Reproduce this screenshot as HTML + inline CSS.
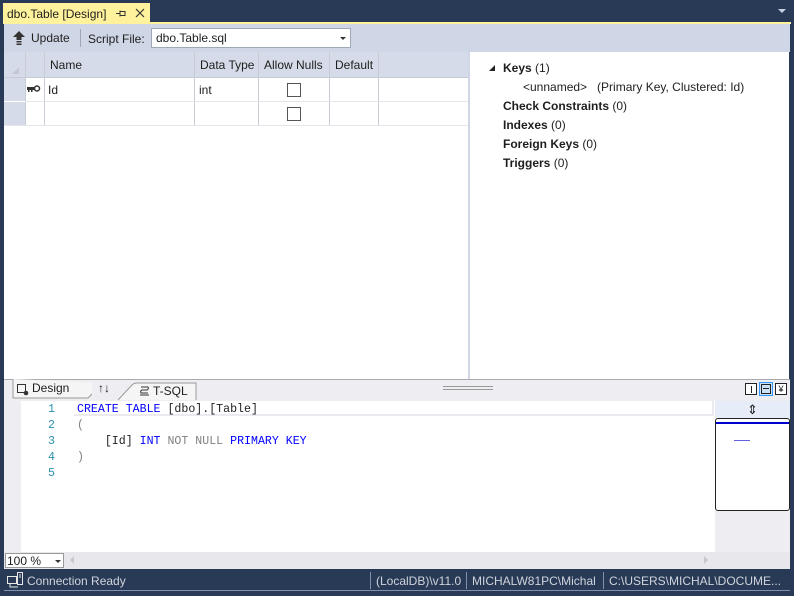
<!DOCTYPE html>
<html><head><meta charset="utf-8"><style>
*{margin:0;padding:0;box-sizing:border-box}
body{width:794px;height:596px;background:#293a56;font-family:"Liberation Sans",sans-serif;font-size:12px;color:#1e1e1e;position:relative;overflow:hidden}
.abs{position:absolute}
.mono{font-family:"Liberation Mono",monospace;font-size:11.6px}
</style></head><body>
<!-- tab -->
<div class="abs" style="left:3px;top:3px;width:147px;height:20px;background:#fff29d"></div>
<div class="abs" style="left:7px;top:7px;font-size:12px">dbo.Table [Design]</div>
<svg class="abs" style="left:115px;top:9px" width="12" height="9"><path d="M1 4.5 H5 M5 1.5 V7.5 M5 2.5 H10 V6.5 H5" fill="none" stroke="#333"/></svg>
<svg class="abs" style="left:135px;top:8px" width="10" height="10"><path d="M1 1 L9 9 M9 1 L1 9" stroke="#333" stroke-width="1.2"/></svg>
<div class="abs" style="left:778px;top:9px;width:0;height:0;border-left:4px solid transparent;border-right:4px solid transparent;border-top:4px solid #c8d0e0"></div>
<div class="abs" style="left:3px;top:22px;width:788px;height:2px;background:#fff29d"></div>
<!-- toolbar -->
<div class="abs" style="left:4px;top:24px;width:786px;height:28px;background:#cfd6e5"></div>
<svg class="abs" style="left:12px;top:30px" width="14" height="16"><path d="M7 1 L13 7 H9.5 V10 H4.5 V7 H1 Z" fill="#333"/><rect x="4.5" y="11" width="5" height="1.5" fill="#333"/><rect x="4.5" y="13.5" width="5" height="1.5" fill="#333"/></svg>
<div class="abs" style="left:31px;top:31px">Update</div>
<div class="abs" style="left:80px;top:29px;width:1px;height:18px;background:#a0a8b8"></div>
<div class="abs" style="left:88px;top:32px">Script File:</div>
<div class="abs" style="left:151px;top:28px;width:200px;height:20px;background:#fff;border:1px solid #a0a8b8"></div>
<div class="abs" style="left:156px;top:31px">dbo.Table.sql</div>
<div class="abs" style="left:340px;top:37px;border-left:3px solid transparent;border-right:3px solid transparent;border-top:3px solid #333"></div>
<!-- left grid -->
<div class="abs" style="left:4px;top:52px;width:464px;height:327px;background:#fff"></div>
<div class="abs" style="left:4px;top:52px;width:464px;height:26px;background:#d5dbe8;border-bottom:1px solid #c8ccd4"></div>
<div class="abs" style="left:4px;top:78px;width:21px;height:48px;background:#d5dbe8"></div>
<div class="abs" style="left:4px;top:101px;width:21px;height:1px;background:#fff"></div>
<div class="abs" style="left:12px;top:67px;border-left:7px solid transparent;border-bottom:7px solid #c3c8d2"></div>
<div class="abs" style="left:25px;top:52px;width:1px;height:74px;background:#c8ccd4"></div>
<div class="abs" style="left:44px;top:52px;width:1px;height:74px;background:#c8ccd4"></div>
<div class="abs" style="left:194px;top:52px;width:1px;height:74px;background:#c8ccd4"></div>
<div class="abs" style="left:258px;top:52px;width:1px;height:74px;background:#c8ccd4"></div>
<div class="abs" style="left:329px;top:52px;width:1px;height:74px;background:#c8ccd4"></div>
<div class="abs" style="left:378px;top:52px;width:1px;height:74px;background:#c8ccd4"></div>
<div class="abs" style="left:25px;top:101px;width:443px;height:1px;background:#e4e6ea"></div>
<div class="abs" style="left:4px;top:125px;width:464px;height:1px;background:#e4e6ea"></div>
<div class="abs" style="left:50px;top:58px">Name</div>
<div class="abs" style="left:200px;top:58px">Data Type</div>
<div class="abs" style="left:264px;top:58px">Allow Nulls</div>
<div class="abs" style="left:335px;top:58px">Default</div>
<svg class="abs" style="left:27px;top:85px" width="14" height="8"><rect x="0" y="2" width="8" height="3" fill="#333"/><rect x="1" y="5" width="1.5" height="2" fill="#333"/><rect x="4" y="5" width="1.5" height="2" fill="#333"/><circle cx="10" cy="3.5" r="2.5" fill="none" stroke="#333" stroke-width="1.5"/></svg>
<div class="abs" style="left:48px;top:83px">Id</div>
<div class="abs" style="left:199px;top:83px">int</div>
<div class="abs" style="left:287px;top:83px;width:14px;height:14px;border:1px solid #555;background:#fff"></div>
<div class="abs" style="left:287px;top:107px;width:14px;height:14px;border:1px solid #555;background:#fff"></div>
<!-- divider -->
<div class="abs" style="left:468px;top:52px;width:2px;height:327px;background:#cfd6e5"></div>
<div class="abs" style="left:473px;top:170px;width:1px;height:48px;background:#999"></div>
<div class="abs" style="left:476px;top:170px;width:1px;height:48px;background:#999"></div>
<!-- right panel -->
<div class="abs" style="left:470px;top:52px;width:319px;height:327px;background:#fff"></div>
<div class="abs" style="left:489px;top:65px;border-left:6px solid transparent;border-bottom:6px solid #222"></div>
<div class="abs" style="left:503px;top:61px"><b>Keys</b> (1)</div>
<div class="abs" style="left:523px;top:80px">&lt;unnamed&gt;&nbsp;&nbsp;&nbsp;(Primary Key, Clustered: Id)</div>
<div class="abs" style="left:503px;top:99px"><b>Check Constraints</b> (0)</div>
<div class="abs" style="left:503px;top:118px"><b>Indexes</b> (0)</div>
<div class="abs" style="left:503px;top:137px"><b>Foreign Keys</b> (0)</div>
<div class="abs" style="left:503px;top:156px"><b>Triggers</b> (0)</div>
<!-- bottom tab bar -->
<div class="abs" style="left:4px;top:379px;width:786px;height:22px;background:#eeeef2;border-top:1px solid #aaa"></div>
<svg class="abs" style="left:12px;top:379px" width="80" height="21"><path d="M1 0 V19 H76 L91 4" fill="#f5f5f5" stroke="#999"/></svg>
<svg class="abs" style="left:17px;top:384px" width="12" height="12"><rect x="0.5" y="0.5" width="8" height="8" fill="none" stroke="#333"/><circle cx="9" cy="9" r="2.3" fill="#333"/></svg>
<div class="abs" style="left:32px;top:381px">Design</div>
<div class="abs" style="left:98px;top:381px;font-size:12px;font-weight:bold">↑↓</div>
<svg class="abs" style="left:118px;top:381px" width="80" height="20"><path d="M0 19 L14 4 Q16 2 19 2 H78 V19" fill="#f5f5f5" stroke="#999"/></svg>
<svg class="abs" style="left:139px;top:386px" width="11" height="10"><path d="M2 1 H9 Q10 3 8 4 H3 Q1 5 2 7 H9 M1 9 H10" fill="none" stroke="#333"/></svg>
<div class="abs" style="left:153px;top:384px">T-SQL</div>
<div class="abs" style="left:443px;top:386px;width:50px;height:1px;background:#999"></div>
<div class="abs" style="left:443px;top:389px;width:50px;height:1px;background:#999"></div>
<div class="abs" style="left:745px;top:383px;width:12px;height:12px;border:1px solid #222;background:#fff"><div style="margin:2px 0 0 5px;width:1px;height:7px;background:#222"></div></div>
<div class="abs" style="left:759px;top:382px;width:14px;height:14px;border:1px solid #3399ff;background:#c9e0f7"><div style="margin:1px;width:10px;height:10px;border:1px solid #222"><div style="margin:3px 1px;height:1px;background:#222"></div></div></div>
<div class="abs" style="left:775px;top:383px;width:12px;height:12px;border:1px solid #222;background:#fff;font-size:9px;line-height:10px;text-align:center">¥</div>
<!-- editor -->
<div class="abs" style="left:4px;top:401px;width:711px;height:151px;background:#fff"></div>
<div class="abs" style="left:4px;top:401px;width:17px;height:151px;background:#eeeef2"></div>
<div class="abs" style="left:74px;top:401px;width:640px;height:15px;border:2px solid #eaeaf0;border-top:none;border-left:none"></div>
<div class="abs mono" style="left:48px;top:402px;color:#2b91af;line-height:16px">1<br>2<br>3<br>4<br>5</div>
<div class="abs mono" style="left:77px;top:402px;line-height:16px;white-space:pre"><span style="color:#0000ff">CREATE TABLE</span> [dbo].[Table]
<span style="color:#808080">(</span>
    [Id] <span style="color:#0000ff">INT</span> <span style="color:#808080">NOT NULL</span> <span style="color:#0000ff">PRIMARY KEY</span>
<span style="color:#808080">)</span></div>
<div class="abs" style="left:715px;top:401px;width:75px;height:151px;background:#eeeef2"></div>
<div class="abs" style="left:715px;top:401px;width:75px;height:18px;background:#e6ecf8;text-align:center;font-size:13px;line-height:17px">⇕</div>
<div class="abs" style="left:715px;top:418px;width:75px;height:93px;background:#fff;border:1px solid #222;border-radius:3px"></div>
<div class="abs" style="left:716px;top:422px;width:73px;height:2px;background:#0000cc"></div>
<div class="abs" style="left:734px;top:440px;width:16px;height:1px;background:#6060e0"></div>
<!-- scroll row -->
<div class="abs" style="left:4px;top:552px;width:786px;height:17px;background:#e8e8ec"></div>
<div class="abs" style="left:5px;top:553px;width:59px;height:15px;background:#fff;border:1px solid #999"></div>
<div class="abs" style="left:7px;top:554px;font-size:12px">100 %</div>
<div class="abs" style="left:55px;top:560px;border-left:3px solid transparent;border-right:3px solid transparent;border-top:3px solid #333"></div>
<div class="abs" style="left:70px;top:556px;border-top:4px solid transparent;border-bottom:4px solid transparent;border-right:4px solid #c8c8cc"></div>
<div class="abs" style="left:704px;top:556px;border-top:4px solid transparent;border-bottom:4px solid transparent;border-left:4px solid #c8c8cc"></div>
<!-- status -->
<div class="abs" style="left:4px;top:569px;width:786px;height:22px;background:#293a56;border-bottom:1px solid #8090b0"></div>
<svg class="abs" style="left:7px;top:572px" width="16" height="16"><rect x="0.5" y="4.5" width="9" height="7" fill="none" stroke="#e8e8e8"/><rect x="10.5" y="0.5" width="5" height="12" fill="none" stroke="#e8e8e8"/><line x1="12" y1="3" x2="14" y2="3" stroke="#e8e8e8"/><line x1="12" y1="5" x2="14" y2="5" stroke="#e8e8e8"/><path d="M3 12 V15 H11" fill="none" stroke="#e8e8e8"/></svg>
<div class="abs" style="left:27px;top:574px;color:#d0d4dc">Connection Ready</div>
<div class="abs" style="left:370px;top:572px;width:1px;height:17px;background:#8090b0"></div>
<div class="abs" style="left:376px;top:574px;color:#d0d4dc">(LocalDB)\v11.0</div>
<div class="abs" style="left:466px;top:572px;width:1px;height:17px;background:#8090b0"></div>
<div class="abs" style="left:472px;top:574px;color:#d0d4dc">MICHALW81PC\Michal</div>
<div class="abs" style="left:603px;top:572px;width:1px;height:17px;background:#8090b0"></div>
<div class="abs" style="left:609px;top:574px;color:#d0d4dc">C:\USERS\MICHAL\DOCUME...</div>
</body></html>
